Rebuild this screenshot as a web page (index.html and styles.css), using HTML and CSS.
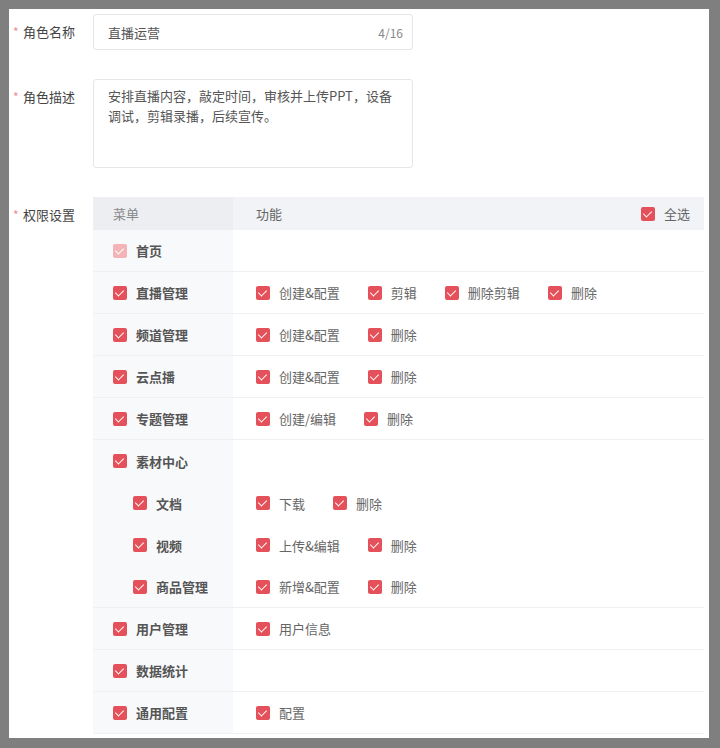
FILE: index.html
```html
<!DOCTYPE html>
<html lang="zh">
<head>
<meta charset="utf-8">
<link rel="stylesheet" href="styles.css">
</head>
<body>
<div class="card">
  <div class="form-row">
    <div class="label"><span class="req">*</span>角色名称</div>
    <div class="input"><span class="val">直播运营</span><span class="count">4/16</span></div>
  </div>
  <div class="form-row">
    <div class="label"><span class="req">*</span>角色描述</div>
    <div class="textarea">安排直播内容，敲定时间，审核并上传PPT，设备调试，剪辑录播，后续宣传。</div>
  </div>
  <div class="form-row">
    <div class="label"><span class="req">*</span>权限设置</div>
    <div class="table">
      <div class="thead">
        <div class="c1">菜单</div>
        <div class="c2">功能<span class="all"><span class="cb"></span>全选</span></div>
      </div>
      <div class="tr">
        <div class="c1"><span class="cb dis"></span><span class="name">首页</span></div>
        <div class="c2"></div>
      </div>
      <div class="tr">
        <div class="c1"><span class="cb"></span><span class="name">直播管理</span></div>
        <div class="c2"><span class="item"><span class="cb"></span>创建&amp;配置</span><span class="item"><span class="cb"></span>剪辑</span><span class="item"><span class="cb"></span>删除剪辑</span><span class="item"><span class="cb"></span>删除</span></div>
      </div>
      <div class="tr">
        <div class="c1"><span class="cb"></span><span class="name">频道管理</span></div>
        <div class="c2"><span class="item"><span class="cb"></span>创建&amp;配置</span><span class="item"><span class="cb"></span>删除</span></div>
      </div>
      <div class="tr">
        <div class="c1"><span class="cb"></span><span class="name">云点播</span></div>
        <div class="c2"><span class="item"><span class="cb"></span>创建&amp;配置</span><span class="item"><span class="cb"></span>删除</span></div>
      </div>
      <div class="tr">
        <div class="c1"><span class="cb"></span><span class="name">专题管理</span></div>
        <div class="c2"><span class="item"><span class="cb"></span>创建/编辑</span><span class="item"><span class="cb"></span>删除</span></div>
      </div>
      <div class="group">
        <div class="tr">
          <div class="c1"><span class="cb"></span><span class="name">素材中心</span></div>
          <div class="c2"></div>
        </div>
        <div class="tr">
          <div class="c1 sub"><span class="cb"></span><span class="name">文档</span></div>
          <div class="c2"><span class="item"><span class="cb"></span>下载</span><span class="item"><span class="cb"></span>删除</span></div>
        </div>
        <div class="tr">
          <div class="c1 sub"><span class="cb"></span><span class="name">视频</span></div>
          <div class="c2"><span class="item"><span class="cb"></span>上传&amp;编辑</span><span class="item"><span class="cb"></span>删除</span></div>
        </div>
        <div class="tr">
          <div class="c1 sub"><span class="cb"></span><span class="name">商品管理</span></div>
          <div class="c2"><span class="item"><span class="cb"></span>新增&amp;配置</span><span class="item"><span class="cb"></span>删除</span></div>
        </div>
      </div>
      <div class="tr">
        <div class="c1"><span class="cb"></span><span class="name">用户管理</span></div>
        <div class="c2"><span class="item"><span class="cb"></span>用户信息</span></div>
      </div>
      <div class="tr">
        <div class="c1"><span class="cb"></span><span class="name">数据统计</span></div>
        <div class="c2"></div>
      </div>
      <div class="tr">
        <div class="c1"><span class="cb"></span><span class="name">通用配置</span></div>
        <div class="c2"><span class="item"><span class="cb"></span>配置</span></div>
      </div>
    </div>
  </div>
</div>
</body>
</html>
```

FILE: styles.css
```css
* { box-sizing: border-box; }
html, body { margin: 0; padding: 0; }
body {
  background: #7f7f7f;
  padding: 9px 11px 10px 9px;
  font-family: "Noto Sans CJK SC", "Microsoft YaHei", sans-serif;
  font-size: 13px;
  color: #555;
}
.card {
  background: #fff;
  height: 729px;
  padding: 5px 0 0 0;
  overflow: hidden;
}
.form-row {
  display: flex;
  align-items: flex-start;
  margin-bottom: 29px;
}
.label {
  width: 84px;
  flex: none;
  padding-left: 4px;
  line-height: 36px;
  color: #444;
  white-space: nowrap;
}
.req {
  color: #f08a8f;
  display: inline-block;
  width: 10px;
  font-size: 12px;
}
.input {
  width: 320px;
  height: 36px;
  border: 1px solid #e4e6ea;
  border-radius: 3px;
  display: flex;
  align-items: center;
  justify-content: space-between;
  padding: 0 9px 0 14px;
  color: #555;
}
.count { color: #888; font-size: 12px; }
.textarea {
  width: 320px;
  height: 89px;
  border: 1px solid #e4e6ea;
  border-radius: 3px;
  padding: 6px 14px;
  line-height: 20px;
  color: #555;
}
.form-row:nth-child(3) .label { line-height: 36px; }
.table {
  width: 611px;
  flex: none;
}
.thead, .tr {
  display: flex;
}
.thead {
  height: 33px;
  background: #f1f3f6;
  color: #888;
}
.thead .c1 { background: #eceef2; }
.thead .c1, .thead .c2 {
  display: flex;
  align-items: center;
}
.thead .c1 { padding-left: 20px; }
.c1 {
  width: 140px;
  flex: none;
  background: #f8f9fb;
  display: flex;
  align-items: center;
  padding-left: 20px;
}
.c1.sub { padding-left: 40px; }
.c2 {
  flex: 1;
  display: flex;
  align-items: center;
  padding-left: 23px;
  color: #666;
}
.tr {
  height: 42px;
  border-bottom: 1px solid #eef0f3;
}
.group .tr { border-bottom: none; }
.group { border-bottom: 1px solid #eef0f3; }
.group .tr { height: 42px; }
.group .tr:last-child { height: 41px; }
.name {
  margin-left: 9px;
  font-weight: 600;
  color: #555;
}
.item {
  display: inline-flex;
  align-items: center;
  margin-right: 28px;
}
.item .cb { margin-right: 9px; }
.all {
  margin-left: auto;
  margin-right: 14px;
  display: inline-flex;
  align-items: center;
  color: #666;
}
.all .cb { margin-right: 9px; }
.cb {
  display: inline-block;
  width: 14px;
  height: 14px;
  border-radius: 2px;
  background: #e4515b;
  position: relative;
  flex: none;
}
.cb::after {
  content: "";
  position: absolute;
  left: 4px;
  top: 2px;
  width: 4px;
  height: 7px;
  border: solid #fff;
  border-width: 0 1.5px 1.5px 0;
  transform: rotate(45deg);
}
.cb.dis { background: #f3b3b7; }
```
